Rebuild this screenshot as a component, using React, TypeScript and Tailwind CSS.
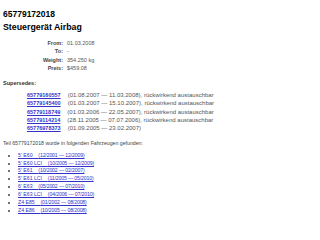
const info = [
  { label: "From:", value: "01.03.2008" },
  { label: "To:", value: "-" },
  { label: "Weight:", value: "354.250 kg" },
  { label: "Preis:", value: "$459.08" },
];

const supersedes = [
  { part: "65779160557", range: "(01.08.2007 — 11.03.2008), rückwirkend austauschbar" },
  { part: "65779145400", range: "(01.03.2007 — 15.10.2007), rückwirkend austauschbar" },
  { part: "65779118749", range: "(01.03.2006 — 22.05.2007), rückwirkend austauschbar" },
  { part: "65779114214", range: "(28.11.2005 — 07.07.2006), rückwirkend austauschbar" },
  { part: "65776978373", range: "(01.09.2005 — 23.02.2007)" },
];

const vehicles = [
  { name: "5' E60", range: "(12/2001 — 12/2009)" },
  { name: "5' E60 LCI", range: "(10/2005 — 12/2009)" },
  { name: "5' E61", range: "(10/2002 — 02/2007)" },
  { name: "5' E61 LCI", range: "(11/2005 — 05/2010)" },
  { name: "6' E63", range: "(05/2002 — 07/2010)" },
  { name: "6' E63 LCI", range: "(04/2006 — 07/2010)" },
  { name: "Z4 E85", range: "(01/2002 — 08/2008)" },
  { name: "Z4 E86", range: "(10/2005 — 08/2008)" },
];

export default function App() {
  return (
    <div className="w-[320px] h-[240px] overflow-hidden bg-white px-[3px] pt-[8px] font-['Liberation_Sans',Arial,sans-serif] text-[#333]">
      <h1 className="text-[8.5px] font-bold leading-[12px] text-black">65779172018</h1>
      <h2 className="mt-[1px] text-[8.8px] font-bold leading-[12px] text-black">Steuergerät Airbag</h2>

      <table className="mt-[6px] ml-[34px] text-[5.5px] leading-[8.3px]">
        <tbody>
          {info.map((r) => (
            <tr key={r.label}>
              <td className="w-[30px] pr-[4px] text-right font-bold text-[#444]">{r.label}</td>
              <td className="text-[#555]">{r.value}</td>
            </tr>
          ))}
        </tbody>
      </table>

      <p className="mt-[7px] text-[5.5px] font-bold leading-[8px] text-[#333]">Supersedes:</p>

      <div className="mt-[4px] pl-[24px] leading-[8.3px]">
        {supersedes.map((s) => (
          <div key={s.part} className="flex items-baseline gap-[7px] whitespace-nowrap">
            <a href="#" className="text-[5.5px] font-bold text-[#3333cc] underline">{s.part}</a>
            <span className="text-[6px] text-[#555]">{s.range}</span>
          </div>
        ))}
      </div>

      <p className="mt-[6px] text-[5.2px] leading-[8px] text-[#444]">
        Teil 65779172018 wurde in folgenden Fahrzeugen gefunden:
      </p>

      <ul className="mt-[5px] list-disc pl-[15px] text-[5.2px] leading-[7.9px] text-[#444]">
        {vehicles.map((v) => (
          <li key={v.name}>
            <a href="#" className="whitespace-pre text-[#3333cc] underline">
              {v.name + "    "}
              <span className="tracking-[-0.15px]">{v.range}</span>
            </a>
          </li>
        ))}
      </ul>
    </div>
  );
}
